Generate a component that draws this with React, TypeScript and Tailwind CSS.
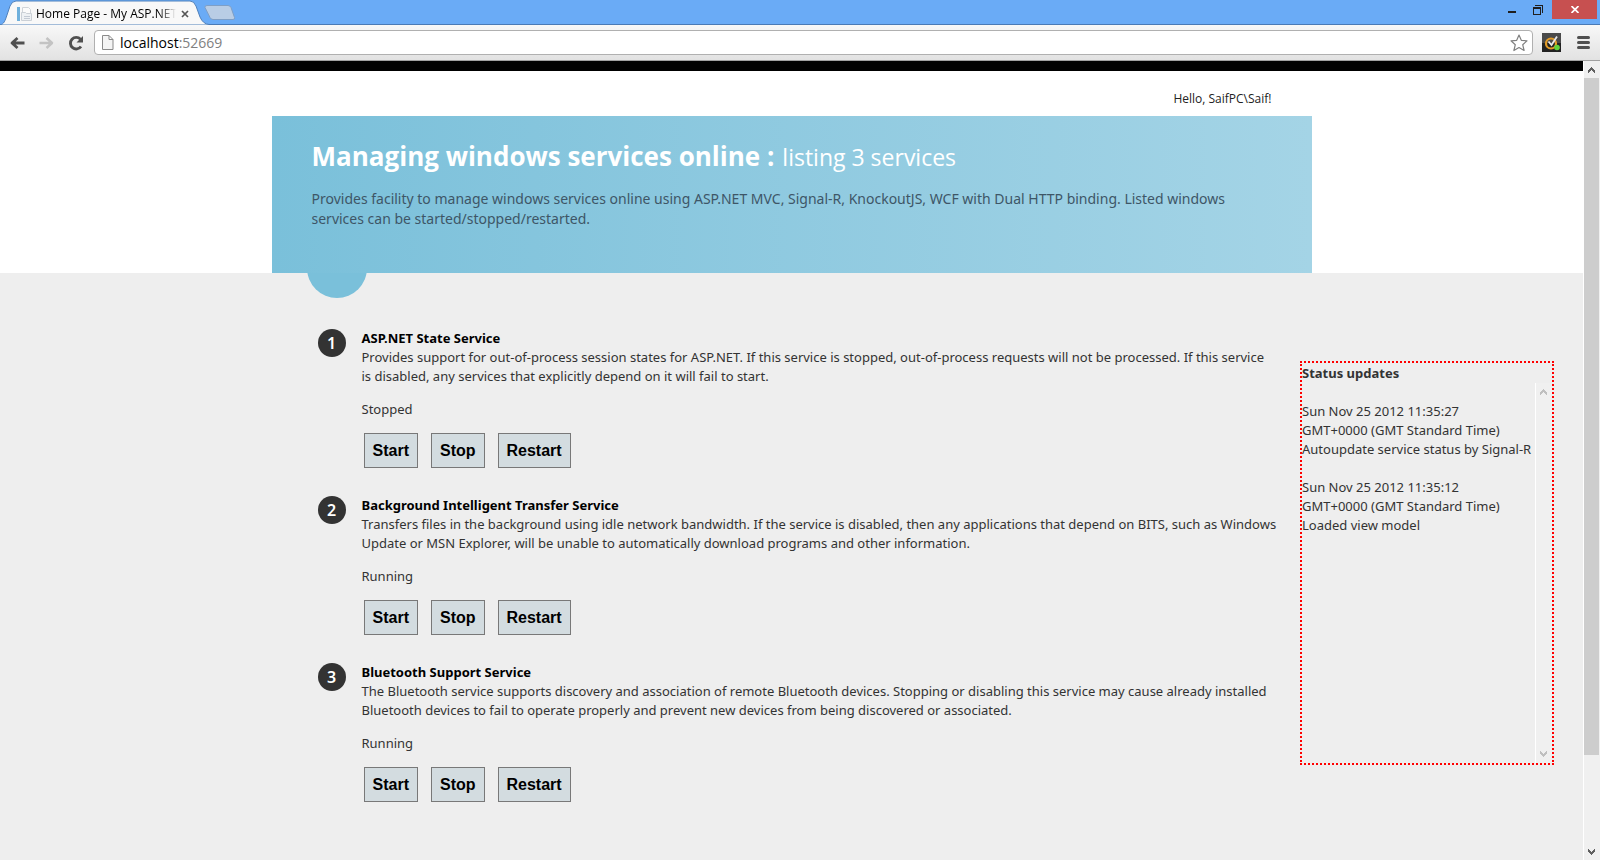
import React from "react";

type Service = { name: string; description: string; status: string };

const services: Service[] = [
  {
    name: "ASP.NET State Service",
    description:
      "Provides support for out-of-process session states for ASP.NET. If this service is stopped, out-of-process requests will not be processed. If this service\nis disabled, any services that explicitly depend on it will fail to start.",
    status: "Stopped",
  },
  {
    name: "Background Intelligent Transfer Service",
    description:
      "Transfers files in the background using idle network bandwidth. If the service is disabled, then any applications that depend on BITS, such as Windows\nUpdate or MSN Explorer, will be unable to automatically download programs and other information.",
    status: "Running",
  },
  {
    name: "Bluetooth Support Service",
    description:
      "The Bluetooth service supports discovery and association of remote Bluetooth devices. Stopping or disabling this service may cause already installed\nBluetooth devices to fail to operate properly and prevent new devices from being discovered or associated.",
    status: "Running",
  },
];

const updates = [
  { time: "Sun Nov 25 2012 11:35:27", zone: "GMT+0000 (GMT Standard Time)", text: "Autoupdate service status by Signal-R" },
  { time: "Sun Nov 25 2012 11:35:12", zone: "GMT+0000 (GMT Standard Time)", text: "Loaded view model" },
];

function Chevron({ down, className }: { down?: boolean; className: string }) {
  return (
    <svg width="7" height="6" viewBox="0 0 7 6" className={className} shapeRendering="crispEdges" aria-hidden="true">
      {down ? (
        <path d="M0 0h1v1h1v1h1v1h1v-1h1v-1h1v-1h1v3h-1v1h-1v1h-1v1h-1v-1h-1v-1h-1v-1h-1z" fill="currentColor" />
      ) : (
        <path d="M3 0h1v1h1v1h1v1h1v3h-1v-1h-1v-1h-1v-1h-1v1h-1v1h-1v1h-1v-3h1v-1h1v-1h1z" fill="currentColor" />
      )}
    </svg>
  );
}

function TabStrip() {
  return (
    <div className="flex h-6 items-start bg-[#6aabf6]">
      <div className="relative h-6 w-[209px]">
        <svg width="209" height="25" viewBox="0 0 209 25" className="absolute top-0 left-0" aria-hidden="true">
          <path d="M0 25 C4 24 5 21 7 15 L10 6 Q12 1 16 1 L190 1 Q194 1 196 6 L200 17 Q203 24 209 24.500 L209 25 Z" fill="#f8f8f8" stroke="#4f80bb" strokeWidth="1" />
        </svg>
        <div className="relative flex h-6 items-center pt-1 pl-4">
          <svg width="16" height="16" viewBox="0 0 16 16" className="shrink-0" aria-hidden="true">
            <rect x="1" y="1" width="3" height="14" fill="#6fb0dc" />
            <path d="M6.500 1.500h6l2 2v5h-8z" fill="#fbfbfb" stroke="#d0d4d9" />
            <path d="M5.500 6.500h4l1 1h5v7h-10z" fill="#eef1f4" stroke="#cbd0d6" />
            <path d="M8 10.500h6M8 12.500h6" stroke="#c3cad4" />
          </svg>
          <span className="ml-1 w-[140px] bg-gradient-to-r from-black from-88% to-transparent bg-clip-text text-xs whitespace-nowrap text-transparent">
            Home Page - My ASP.NET
          </span>
          <button aria-label="Close tab" className="ml-px flex h-4 w-4 items-center justify-center">
            <svg width="8" height="8" viewBox="0 0 8 8" aria-hidden="true">
              <path d="M1 1l6 6M7 1L1 7" stroke="#555" strokeWidth="1.700" />
            </svg>
          </button>
        </div>
      </div>
      <button aria-label="New tab" className="-ml-[5px] mt-[5px]">
        <svg width="32" height="16" viewBox="0 0 32 16" aria-hidden="true">
          <path d="M3 .5h21q2 0 3 2l3.500 10q.5 2-1.500 2H9q-2 0-3-2L1 2.500Q.5.5 3 .5z" fill="#b9cde5" stroke="#7f9fc6" />
        </svg>
      </button>
      <div className="ml-auto flex h-[19px] items-stretch">
        <button aria-label="Minimize" className="flex w-6 items-end justify-center pb-1.5">
          <span className="h-0.5 w-2 bg-[#1f1f1f]" />
        </button>
        <button aria-label="Restore" className="flex w-7 items-center justify-center">
          <svg width="10" height="10" viewBox="0 0 10 10" shapeRendering="crispEdges" aria-hidden="true">
            <path d="M2 0h8v8h-1v-7H2z" fill="#1f1f1f" />
            <path d="M0 2h8v8H0zM1 4v5h6V4z" fill="#1f1f1f" fillRule="evenodd" />
          </svg>
        </button>
        <button aria-label="Close" className="mr-[3px] flex w-[45px] items-center justify-center bg-[#c75050]">
          <svg width="8" height="7" viewBox="0 0 8 7" aria-hidden="true">
            <path d="M.5 0l7 7M7.500 0l-7 7" stroke="#fff" strokeWidth="1.700" />
          </svg>
        </button>
      </div>
    </div>
  );
}

function Toolbar() {
  return (
    <div className="flex h-[37px] items-center border-t border-b border-t-[#4a7ab5] border-b-[#a0a0a0] bg-gradient-to-b from-[#f8f8f8] to-[#e2e2e2] pl-[9px]">
      <button aria-label="Back">
        <svg width="16" height="14" viewBox="0 0 16 14" aria-hidden="true">
          <path d="M15.500 7H3.500M8.500 2L3 7l5.500 5" fill="none" stroke="#505050" strokeWidth="2.800" strokeLinejoin="round" />
        </svg>
      </button>
      <button aria-label="Forward" className="ml-3.5">
        <svg width="16" height="14" viewBox="0 0 16 14" aria-hidden="true">
          <path d="M.5 7h12M7.500 2L13 7l-5.500 5" fill="none" stroke="#c3c3c3" strokeWidth="2.500" strokeLinejoin="round" />
        </svg>
      </button>
      <button aria-label="Reload" className="ml-[13px]">
        <svg width="16" height="16" viewBox="0 0 16 16" aria-hidden="true">
          <path d="M13 11.500A5.800 5.800 0 1 1 12.500 4.200" fill="none" stroke="#505050" strokeWidth="2.900" />
          <path d="M15 1v6.500H8.500z" fill="#505050" />
        </svg>
      </button>
      <div className="ml-2.5 flex h-[25px] flex-1 items-center rounded-sm border border-[#b0b0b0] bg-white pl-[7px]">
        <svg width="12" height="15" viewBox="0 0 12 15" aria-hidden="true">
          <path d="M.5.5h6.500l4 4v10H.5zM7 .5v4h4" fill="#f4f4f4" stroke="#8a8a8a" />
        </svg>
        <a href="#top" className="ml-1.5 flex-1 text-sm text-black">
          localhost<span className="text-[#808080]">:52669</span>
        </a>
        <button aria-label="Bookmark this page" className="mr-1">
          <svg width="18" height="18" viewBox="0 0 18 18" aria-hidden="true">
            <path d="M9 1l2.300 5.300 5.700.5-4.300 3.900 1.400 5.800L9 13.500l-5.100 3 1.400-5.800L1 6.800l5.700-.5z" fill="#fff" stroke="#808080" strokeWidth="1.200" strokeLinejoin="round" />
          </svg>
        </button>
      </div>
      <button aria-label="Security extension" className="ml-[9px]">
        <svg width="19" height="19" viewBox="0 0 19 19" aria-hidden="true">
          <rect width="19" height="19" fill="#4a4a4a" />
          <rect y="10" width="19" height="9" fill="#222" />
          <circle cx="9" cy="10.500" r="5" fill="none" stroke="#e29b27" strokeWidth="2.200" />
          <path d="M6.500 8.500l3 3.500 5.500-8.500" fill="none" stroke="#e8e8e8" strokeWidth="1.800" />
          <circle cx="15" cy="14.500" r="2.800" fill="#5fd43c" />
        </svg>
      </button>
      <button aria-label="Menu" className="mr-2.5 ml-4 flex flex-col gap-0.5">
        <span className="h-[3px] w-[13px] rounded-full bg-[#505050]" />
        <span className="h-[3px] w-[13px] rounded-full bg-[#505050]" />
        <span className="h-[3px] w-[13px] rounded-full bg-[#505050]" />
      </button>
    </div>
  );
}

function ServiceItem({ service, index }: { service: Service; index: number }) {
  return (
    <li className="flex items-start">
      <span className="flex h-7 w-7 shrink-0 items-center justify-center rounded-full bg-[#333] text-base leading-none font-semibold text-white">
        {index}
      </span>
      <div className="ml-4">
        <h2 className="leading-[19px] font-bold text-black">{service.name}</h2>
        <p className="leading-[19px] whitespace-pre-line">{service.description}</p>
        <p className="mt-3.5 leading-[19px]">{service.status}</p>
        <div className="mt-3.5 mb-7 ml-0.5 flex gap-[13px] font-['Liberation_Sans',Arial,sans-serif] text-base leading-[19px] font-bold text-black">
          {["Start", "Stop", "Restart"].map((action) => (
            <button key={action} className="border border-[#787878] bg-[#d3dce0] px-2 py-[7px]">
              {action}
            </button>
          ))}
        </div>
      </div>
    </li>
  );
}

function StatusPanel() {
  return (
    <aside className="absolute top-[290px] right-[29px] flex h-[404px] w-[254px] flex-col border-2 border-dotted border-[#f00]">
      <h2 className="pt-px leading-[19px] font-bold">Status updates</h2>
      <div className="flex flex-1">
        <div className="min-w-0 flex-1">
          {updates.map((u) => (
            <p key={u.time} className="mt-[19px] leading-[19px] whitespace-nowrap">
              {u.time}
              <br />
              {u.zone}
              <br />
              {u.text}
            </p>
          ))}
        </div>
        <div className="flex w-[17px] shrink-0 flex-col items-center justify-between border-l border-white bg-[#f0f0f0] py-1.5 pr-px text-[#bfbfbf]">
          <Chevron className="block" />
          <Chevron down className="block" />
        </div>
      </div>
    </aside>
  );
}

export default function App() {
  return (
    <div className="flex h-screen flex-col overflow-hidden font-['Noto_Sans','Open_Sans',sans-serif] text-[13px] text-[#333]">
      <header className="font-['Open_Sans','Noto_Sans',sans-serif]">
        <TabStrip />
        <Toolbar />
      </header>
      <div className="flex min-h-0 flex-1">
        <main id="top" className="relative flex-1 overflow-hidden border-t-10 border-black bg-[#eee]">
          <div className="bg-white">
            <div className="mx-auto max-w-[1040px]">
              <p className="px-10 pt-5 pb-[9px] text-right font-['Open_Sans','Noto_Sans',sans-serif] text-xs leading-4 text-[#222]">
                Hello, SaifPC\Saif!
              </p>
              <section className="relative h-[157px] bg-gradient-to-r from-[#7ac0da] to-[#a4d4e6] px-10 pt-6">
                <div className="flex items-baseline gap-2 font-['Open_Sans','Noto_Sans',sans-serif] leading-8 text-white">
                  <h1 className="text-[26px] font-bold">Managing windows services online :</h1>
                  <h2 className="text-[23px]">listing 3 services</h2>
                </div>
                <p className="mt-4 text-sm leading-5 whitespace-pre-line text-[#3e5667]">
                  {"Provides facility to manage windows services online using ASP.NET MVC, Signal-R, KnockoutJS, WCF with Dual HTTP binding. Listed windows\nservices can be started/stopped/restarted."}
                </p>
                <div className="absolute top-full left-[35px] flex h-[25px] items-end overflow-hidden">
                  <span className="h-[60px] w-[60px] shrink-0 rounded-full bg-[#7ac0da]" />
                </div>
              </section>
            </div>
          </div>
          <ol className="mx-auto max-w-[1040px] pt-14 pr-6 pl-[46px]">
            {services.map((s, i) => (
              <ServiceItem key={s.name} service={s} index={i + 1} />
            ))}
          </ol>
          <StatusPanel />
        </main>
        <div className="flex w-[17px] flex-col items-center border-l border-white bg-[#f0f0f0] pr-px text-[#606060]">
          <Chevron className="mt-1.5 mb-[5px] block" />
          <div className="min-h-0 w-[15px] flex-[676] bg-[#cdcdcd]" />
          <div className="flex-[88]" />
          <Chevron down className="mt-1.5 mb-[5px] block" />
        </div>
      </div>
    </div>
  );
}
